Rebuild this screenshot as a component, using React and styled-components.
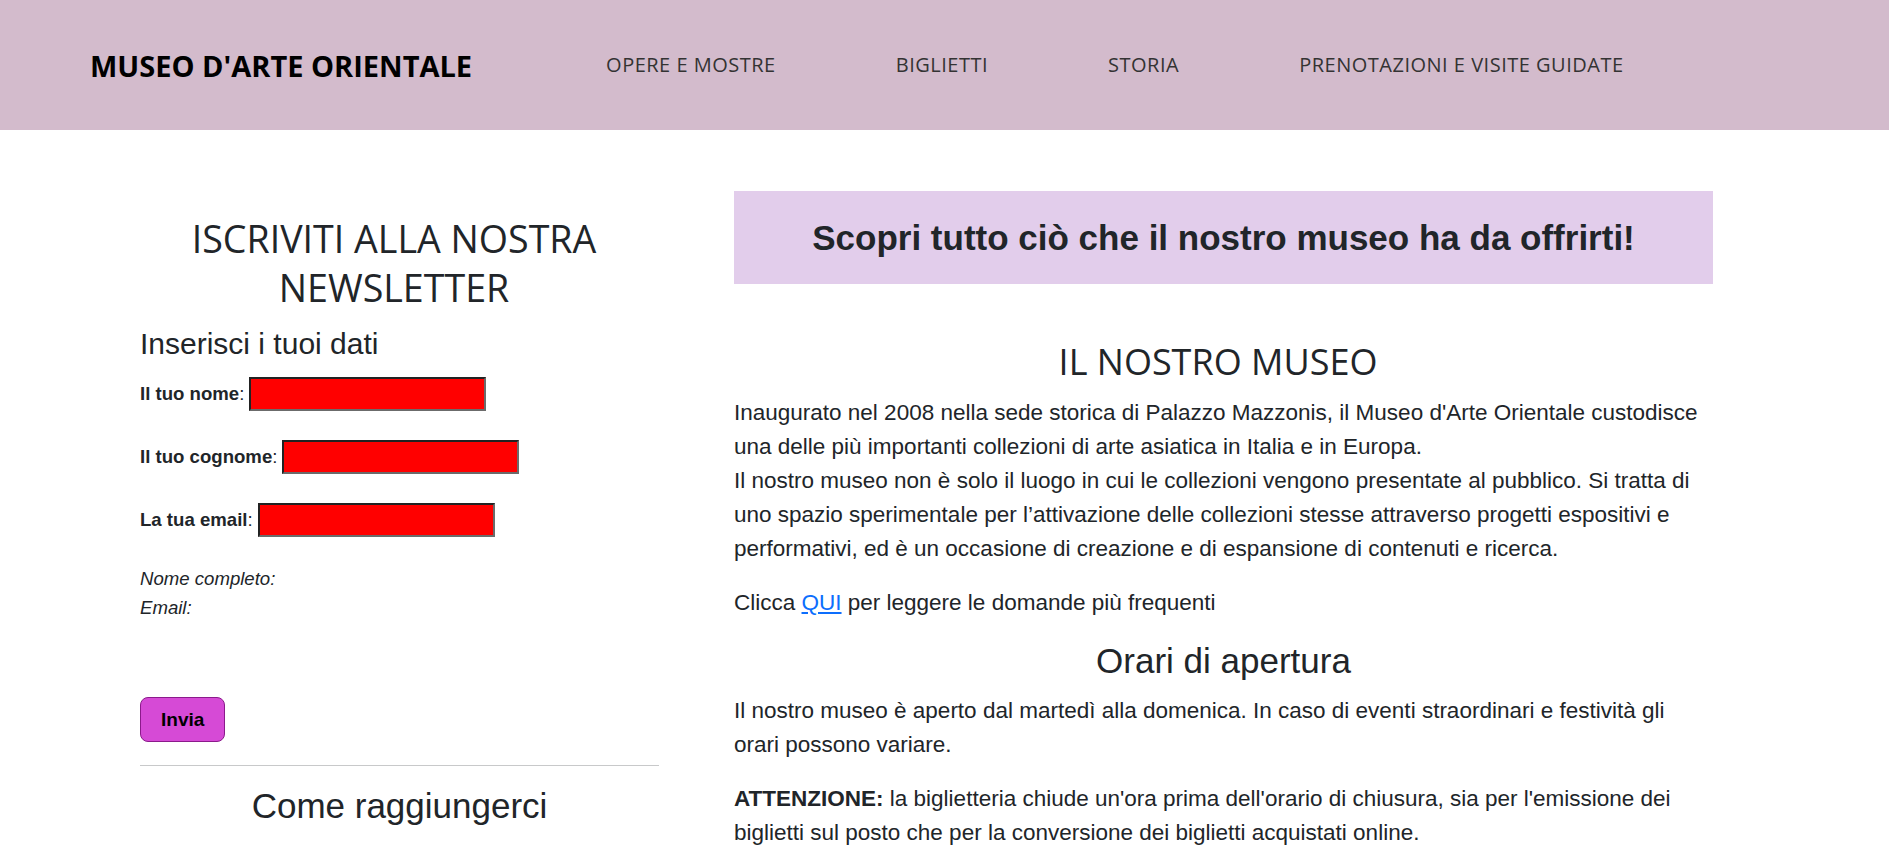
import styled, { createGlobalStyle } from "styled-components";

const GlobalStyle = createGlobalStyle`
  * {
    box-sizing: border-box;
  }
  body {
    margin: 0;
    background: #fff;
    color: #212529;
    font-family: "Liberation Sans", Arial, sans-serif;
  }
`;

const fields = [
  { id: "nome", label: "Il tuo nome" },
  { id: "cognome", label: "Il tuo cognome" },
  { id: "email", label: "La tua email" },
];

const App = () => {
  return (
    <>
      <GlobalStyle />
      <Header>
        <Logo href="#">MUSEO D'ARTE ORIENTALE</Logo>
        <Nav>
          <NavItem href="#">OPERE E MOSTRE</NavItem>
          <NavItem href="#">BIGLIETTI</NavItem>
          <NavItem href="#">STORIA</NavItem>
          <NavItem href="#">PRENOTAZIONI E VISITE GUIDATE</NavItem>
        </Nav>
      </Header>

      <Main>
        <Sidebar>
          <NewsTitle>ISCRIVITI ALLA NOSTRA NEWSLETTER</NewsTitle>
          <FormTitle>Inserisci i tuoi dati</FormTitle>
          <Fields>
            {fields.map((f) => (
              <Row key={f.id}>
                <label htmlFor={f.id}>
                  <b>{f.label}</b>:
                </label>
                <Input id={f.id} type="text" />
              </Row>
            ))}
          </Fields>
          <Output>
            <div>Nome completo:</div>
            <div>Email:</div>
          </Output>
          <SendButton type="button">Invia</SendButton>
          <Divider />
          <SideTitle>Come raggiungerci</SideTitle>
        </Sidebar>

        <Content>
          <Banner>
            <BannerTitle>Scopri tutto ciò che il nostro museo ha da offrirti!</BannerTitle>
          </Banner>
          <SectionTitle>IL NOSTRO MUSEO</SectionTitle>
          <Text>
            Inaugurato nel 2008 nella sede storica di Palazzo Mazzonis, il Museo d'Arte
            Orientale custodisce una delle più importanti collezioni di arte asiatica in
            Italia e in Europa.
            <br />
            Il nostro museo non è solo il luogo in cui le collezioni vengono presentate al
            pubblico. Si tratta di uno spazio sperimentale per l’attivazione delle collezioni
            stesse attraverso progetti espositivi e performativi, ed è un occasione di
            creazione e di espansione di contenuti e ricerca.
          </Text>
          <Text>
            Clicca <TextLink href="#">QUI</TextLink> per leggere le domande più frequenti
          </Text>
          <SubTitle>Orari di apertura</SubTitle>
          <Text>
            Il nostro museo è aperto dal martedì alla domenica. In caso di eventi
            straordinari e festività gli orari possono variare.
          </Text>
          <Text $last>
            <b>ATTENZIONE:</b> la biglietteria chiude un'ora prima dell'orario di chiusura,
            sia per l'emissione dei biglietti sul posto che per la conversione dei biglietti
            acquistati online.
          </Text>
        </Content>
      </Main>
    </>
  );
};

const Header = styled.header`
  height: 130px;
  background: #d3bbcc;
  display: flex;
  align-items: center;
  padding-left: 90px;
`;
const Logo = styled.a`
  font-family: "Open Sans", sans-serif;
  font-weight: 700;
  font-size: 29px;
  color: #000;
  text-decoration: none;
`;
const Nav = styled.nav`
  display: flex;
  gap: 120px;
  margin-left: 134px;
  margin-top: -2px;
`;
const NavItem = styled.a`
  font-family: "Open Sans", sans-serif;
  font-size: 20px;
  letter-spacing: 0.5px;
  color: #333;
  text-decoration: none;
`;

const Main = styled.main`
  display: flex;
  align-items: flex-start;
  gap: 75px;
  padding: 61px 0 0 140px;
`;
const Sidebar = styled.aside`
  width: 519px;
  display: flex;
  flex-direction: column;
`;
const NewsTitle = styled.h2`
  font-family: "Open Sans", sans-serif;
  font-weight: 400;
  font-size: 37.6px;
  line-height: 49px;
  text-align: center;
  margin: 23px 11px 14px 0;
`;
const FormTitle = styled.h3`
  font-weight: 400;
  font-size: 30px;
  line-height: 36px;
  margin: 0 0 15px;
`;
const Fields = styled.div`
  display: flex;
  flex-direction: column;
  gap: 29px;
`;
const Row = styled.div`
  display: flex;
  align-items: center;
  gap: 5px;
  height: 34px;
  font-size: 18.6px;
`;
const Input = styled.input`
  width: 237px;
  height: 34px;
  background: #ff0000;
  border: 2px solid;
  border-color: #222 #6b6b6b #6b6b6b #222;
  padding: 0 4px;
`;
const Output = styled.div`
  margin-top: 27px;
  font-size: 18.6px;
  font-style: italic;
  line-height: 29px;
`;
const SendButton = styled.button`
  align-self: flex-start;
  margin-top: 75px;
  height: 45px;
  padding: 0 20px;
  background: #d64ad6;
  border: 1px solid #8b1a8b;
  border-radius: 8px;
  font-family: "Liberation Sans", Arial, sans-serif;
  font-weight: 700;
  font-size: 19px;
  color: #000;
`;
const Divider = styled.hr`
  width: 100%;
  margin: 23px 0 0;
  border: 0;
  border-top: 1px solid #c8c9ca;
`;
const SideTitle = styled.h2`
  font-weight: 400;
  font-size: 35px;
  line-height: 42px;
  text-align: center;
  margin: 19px 0 0;
`;

const Content = styled.section`
  width: 979px;
`;
const Banner = styled.div`
  height: 93px;
  background: #e2cdeb;
  display: flex;
  align-items: center;
  justify-content: center;
`;
const BannerTitle = styled.h2`
  margin: 0;
  font-weight: 700;
  font-size: 35px;
  line-height: 42px;
`;
const SectionTitle = styled.h2`
  font-family: "Open Sans", sans-serif;
  font-weight: 400;
  font-size: 36px;
  line-height: 47px;
  text-align: center;
  margin: 54px 11px 11px 0;
`;
const SubTitle = styled.h2`
  font-weight: 400;
  font-size: 35px;
  line-height: 42px;
  text-align: center;
  margin: 0 0 12px;
`;
const Text = styled.p`
  font-size: 22.5px;
  line-height: 34px;
  margin: 0 0 ${(p) => (p.$last ? "0" : "20px")};
  padding-right: 11px;
`;
const TextLink = styled.a`
  color: #0d6efd;
  text-decoration: underline;
`;

export default App;
